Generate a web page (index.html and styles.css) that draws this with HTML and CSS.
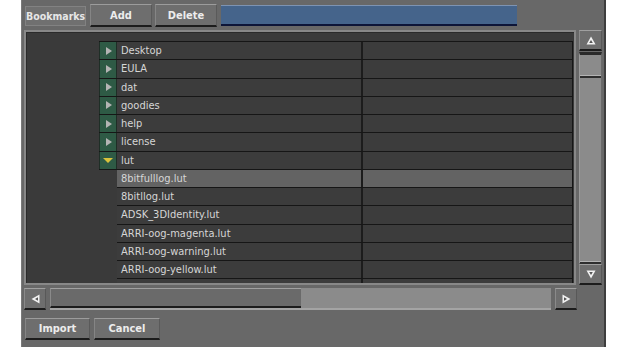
FILE: index.html
```html
<!DOCTYPE html>
<html lang="en">
<head>
    <meta charset="UTF-8">
    <title>Bookmarks</title>
    <link rel="stylesheet" href="styles.css">
</head>
<body>
    <div class="panel">
        <div class="toolbar">
            <div class="label">Bookmarks</div>
            <button class="btn">Add</button>
            <button class="btn">Delete</button>
            <div class="path-field"></div>
        </div>

        <div class="browser">
            <div class="list">
                <div class="row folder first"><span class="toggle"><i class="tri-right"></i></span><span class="name">Desktop</span><span class="info"></span></div>
                <div class="row folder"><span class="toggle"><i class="tri-right"></i></span><span class="name">EULA</span><span class="info"></span></div>
                <div class="row folder"><span class="toggle"><i class="tri-right"></i></span><span class="name">dat</span><span class="info"></span></div>
                <div class="row folder"><span class="toggle"><i class="tri-right"></i></span><span class="name">goodies</span><span class="info"></span></div>
                <div class="row folder"><span class="toggle"><i class="tri-right"></i></span><span class="name">help</span><span class="info"></span></div>
                <div class="row folder"><span class="toggle"><i class="tri-right"></i></span><span class="name">license</span><span class="info"></span></div>
                <div class="row folder"><span class="toggle"><i class="tri-down"></i></span><span class="name">lut</span><span class="info"></span></div>
                <div class="row file selected"><span class="name">8bitfulllog.lut</span><span class="info"></span></div>
                <div class="row file"><span class="name">8bitllog.lut</span><span class="info"></span></div>
                <div class="row file"><span class="name">ADSK_3DIdentity.lut</span><span class="info"></span></div>
                <div class="row file"><span class="name">ARRI-oog-magenta.lut</span><span class="info"></span></div>
                <div class="row file"><span class="name">ARRI-oog-warning.lut</span><span class="info"></span></div>
                <div class="row file"><span class="name">ARRI-oog-yellow.lut</span><span class="info"></span></div>
                <div class="row file last"><span class="name"></span><span class="info"></span></div>
            </div>

            <div class="vscroll">
                <button class="arrow-btn">
                    <svg width="10" height="9" viewBox="0 0 10 9"><path d="M5 0.5 L9.5 8.5 L0.5 8.5 Z" fill="#f2f2f2"/><path d="M5 4 L6.8 7 L3.2 7 Z" fill="#555"/></svg>
                </button>
                <div class="vtrack">
                    <div class="vthumb"></div>
                </div>
                <button class="arrow-btn">
                    <svg width="10" height="9" viewBox="0 0 10 9"><path d="M0.5 0.5 L9.5 0.5 L5 8.5 Z" fill="#f2f2f2"/><path d="M3.2 2 L6.8 2 L5 5 Z" fill="#555"/></svg>
                </button>
            </div>
        </div>

        <div class="hscroll">
            <button class="arrow-btn">
                <svg width="9" height="10" viewBox="0 0 9 10"><path d="M0.5 5 L8.5 0.5 L8.5 9.5 Z" fill="#f2f2f2"/><path d="M4 5 L7 3.2 L7 6.8 Z" fill="#555"/></svg>
            </button>
            <div class="htrack">
                <div class="hthumb"></div>
            </div>
            <button class="arrow-btn">
                <svg width="9" height="10" viewBox="0 0 9 10"><path d="M0.5 0.5 L8.5 5 L0.5 9.5 Z" fill="#f2f2f2"/><path d="M2 3.2 L5 5 L2 6.8 Z" fill="#555"/></svg>
            </button>
        </div>

        <div class="actions">
            <button class="btn">Import</button>
            <button class="btn">Cancel</button>
        </div>
    </div>
</body>
</html>
```

FILE: styles.css
```css
* {
    margin: 0;
    padding: 0;
    box-sizing: border-box;
}

body {
    background: #ffffff;
    font-family: 'DejaVu Sans Condensed', 'DejaVu Sans', sans-serif;
    font-size: 11px;
    overflow: hidden;
}

.panel {
    margin-left: 21px;
    width: 585px;
    height: 347px;
    background: #686868;
    border-left: 1px solid #7a7a7a;
    border-right: 2px solid #3e3e3e;
    padding-left: 2px;
    display: flex;
    flex-direction: column;
}

/* Barre du haut */
.toolbar {
    display: flex;
    align-items: center;
    height: 23px;
    margin-top: 4px;
}

.label {
    margin-left: 1px;
    width: 61px;
    height: 20px;
    line-height: 18px;
    text-align: center;
    color: #e6e6e6;
    font-size: 10.5px;
    font-weight: bold;
    background: #707070;
    border: 1px solid #828282;
    white-space: nowrap;
}

.btn {
    font-family: inherit;
    font-size: 11px;
    font-weight: bold;
    color: #ececec;
    width: 62px;
    height: 23px;
    background: #6e6e6e;
    border: none;
    border-top: 1px solid #9c9c9c;
    border-left: 1px solid #858585;
    border-right: 1px solid #5a5a5a;
    border-bottom: 2px solid #1c1c1c;
}

.toolbar .btn {
    margin-left: 4px;
}

.toolbar .btn + .btn {
    margin-left: 3px;
}

.path-field {
    margin-left: 4px;
    width: 296px;
    height: 21px;
    background: #45648b;
    border-top: 1px solid #7d93b2;
    border-bottom: 2px solid #0d1538;
}

/* Liste des fichiers */
.browser {
    display: flex;
    gap: 3px;
    margin-top: 3px;
    height: 255px;
}

.list {
    width: 552px;
    height: 255px;
    background: #3a3a3a;
    border: 2px solid #888888;
    box-shadow: inset 1px 1px 0 #2a2a2a;
    padding-top: 9px;
    padding-right: 1px;
    overflow: hidden;
}

.row {
    display: flex;
    height: 18.25px;
    background: #3c3c3c;
    border-bottom: 1px solid #161616;
    border-right: 1px solid #161616;
    color: #d6d6d6;
    line-height: 17px;
}

.row.first {
    border-top: 1px solid #161616;
    height: 19.25px;
}

.row.folder {
    margin-left: 73px;
}

.row.file {
    margin-left: 91px;
}

.row.selected {
    background: #636363;
}

.toggle {
    width: 18px;
    background: #2e5a45;
    border-left: 1px solid #1e2e26;
    border-right: 1px solid #1e2e26;
    display: flex;
    align-items: center;
    justify-content: center;
}

.tri-right {
    width: 0;
    height: 0;
    border-top: 4.5px solid transparent;
    border-bottom: 4.5px solid transparent;
    border-left: 6px solid #b4b4b4;
    margin-left: 1px;
}

.tri-down {
    width: 0;
    height: 0;
    border-left: 5px solid transparent;
    border-right: 5px solid transparent;
    border-top: 5px solid #d8c23c;
}

.name {
    width: 246px;
    padding-left: 4px;
    border-right: 2px solid #1c1c1c;
    white-space: nowrap;
    overflow: hidden;
}

.info {
    flex: 1;
}

/* Barres de défilement */
.vscroll {
    width: 23px;
    display: flex;
    flex-direction: column;
}

.arrow-btn {
    width: 22px;
    height: 22px;
    background: #6e6e6e;
    border: none;
    border-top: 1px solid #a0a0a0;
    border-left: 1px solid #8a8a8a;
    border-right: 1px solid #585858;
    border-bottom: 2px solid #1c1c1c;
    display: flex;
    align-items: center;
    justify-content: center;
}

.vscroll .arrow-btn {
    width: 23px;
    height: 21px;
}

.vtrack {
    flex: 1;
    margin: 1px 0 1px;
    background: #8b8b8b;
    border-top: 3px solid #2a2a2a;
    border-left: 1px solid #9a9a9a;
    border-right: 1px solid #6a6a6a;
    padding-top: 20px;
    display: flex;
    flex-direction: column;
}

.vthumb {
    flex: 1;
    margin-bottom: 1px;
    border-top: 1px solid #b4b4b4;
    border-bottom: 1px solid #b4b4b4;
    box-shadow: inset 0 2px 0 #2e2e2e, 0 2px 0 #2e2e2e;
}

.hscroll {
    display: flex;
    align-items: center;
    gap: 4px;
    margin-top: 3px;
    height: 22px;
}

.htrack {
    width: 501px;
    height: 22px;
    display: flex;
    background: #8b8b8b;
    border-bottom: 2px solid #a4a4a4;
}

.hthumb {
    width: 251px;
    height: 20px;
    background: #6a6a6a;
    border-top: 1px solid #a0a0a0;
    border-left: 1px solid #8a8a8a;
    border-bottom: 2px solid #1c1c1c;
}

/* Boutons du bas */
.actions {
    display: flex;
    gap: 4px;
    margin-top: 8px;
    padding-left: 1px;
}

.actions .btn {
    width: 65px;
    height: 22px;
}

.actions .btn + .btn {
    width: 66px;
}
```
